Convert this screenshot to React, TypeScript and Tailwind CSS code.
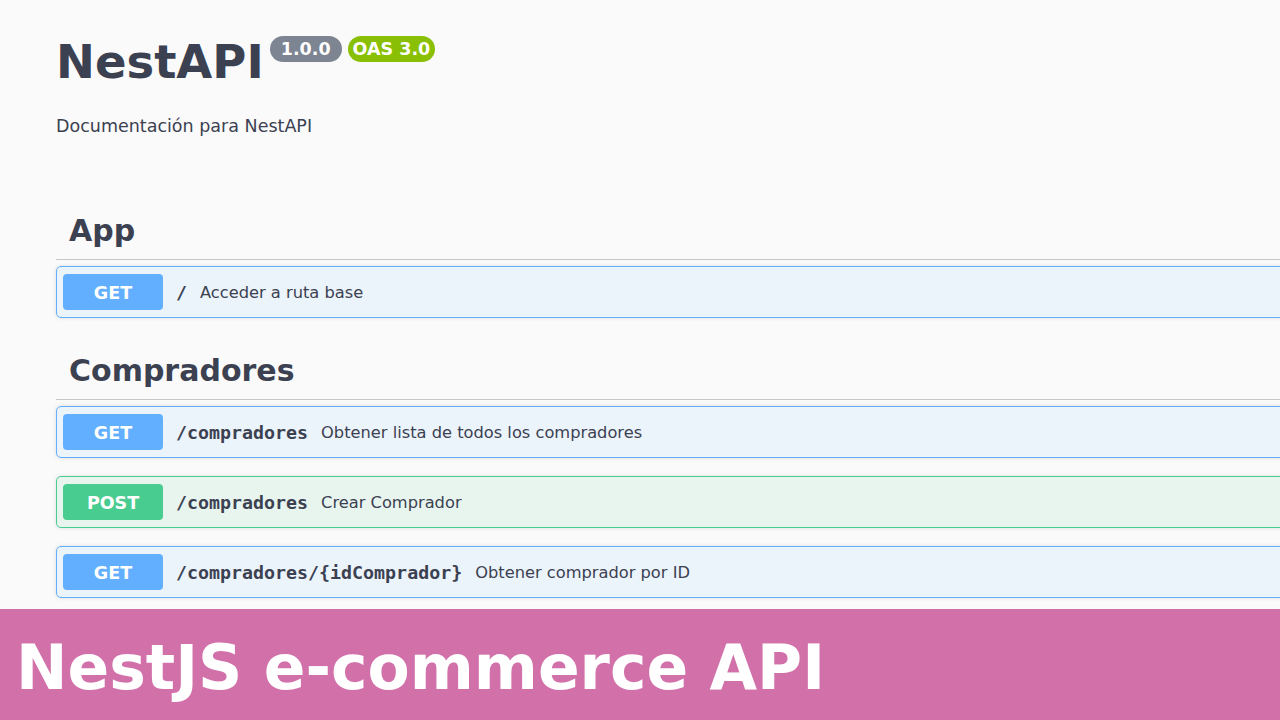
import React from "react";

const sans = { fontFamily: '"DejaVu Sans", Verdana, sans-serif' };
const mono = { fontFamily: '"DejaVu Sans Mono", monospace' };

type Op = { method: "GET" | "POST"; path: string; desc: string };

function Row({ op }: { op: Op }) {
  const isGet = op.method === "GET";
  return (
    <div
      className={`-mr-4 flex h-[52px] items-center rounded-[5px] border-[1.5px] px-[6px] ${
        isGet ? "border-[#61affe] bg-[#ebf3fb]" : "border-[#49cc90] bg-[#e8f5ef]"
      } shadow-[0_0_4px_rgba(0,0,0,0.12)]`}
    >
      <div
        className={`flex h-[36px] w-[100px] items-center justify-center rounded-[4px] pt-[2px] text-[17.5px] font-bold text-white ${
          isGet ? "bg-[#61affe]" : "bg-[#49cc90]"
        }`}
        style={sans}
      >
        {op.method}
      </div>
      <span className="ml-[13px] pt-[1px] text-[18.3px] font-bold text-[#3b4151]" style={mono}>
        {op.path}
      </span>
      <span className="ml-[13px] pt-[2px] text-[16.25px] text-[#3b4151]" style={sans}>
        {op.desc}
      </span>
    </div>
  );
}

function Tag({ name }: { name: string }) {
  return (
    <div className="flex h-[53px] items-end border-b border-[#c6c6c6] pb-[13px] pl-[13px]">
      <h3 className="text-[30px] font-bold leading-none text-[#3b4151]" style={sans}>
        {name}
      </h3>
    </div>
  );
}

export default function App() {
  return (
    <div className="flex h-screen w-full flex-col overflow-hidden bg-[#fafafa]" style={sans}>
      <div className="flex-1 overflow-hidden pl-[56px]">
        <div className="flex items-start pt-[30px]">
          <h2 className="text-[46.5px] font-bold leading-[64px] text-[#3b4151]">NestAPI</h2>
          <div className="ml-[6px] mt-[6px] flex gap-[6px]">
            <span className="flex h-[26px] items-center rounded-full bg-[#7d8492] px-[11px] text-[17.5px] font-bold text-white">
              1.0.0
            </span>
            <span className="flex h-[26px] items-center rounded-full bg-[#89bf04] px-[5px] text-[17.5px] font-bold text-white">
              OAS 3.0
            </span>
          </div>
        </div>
        <p className="mt-[19px] text-[17.5px] text-[#3b4151]">Documentación para NestAPI</p>

        <div className="mt-[68px]">
          <Tag name="App" />
          <div className="mt-[6px]">
            <Row op={{ method: "GET", path: "/", desc: "Acceder a ruta base" }} />
          </div>
        </div>

        <div className="mt-[29px]">
          <Tag name="Compradores" />
          <div className="mt-[6px] flex flex-col gap-[18px]">
            <Row op={{ method: "GET", path: "/compradores", desc: "Obtener lista de todos los compradores" }} />
            <Row op={{ method: "POST", path: "/compradores", desc: "Crear Comprador" }} />
            <Row op={{ method: "GET", path: "/compradores/{idComprador}", desc: "Obtener comprador por ID" }} />
          </div>
        </div>
      </div>
      <div className="flex h-[111px] items-center bg-[#d170a9] pl-[16px] pt-[8px]">
        <span
          className="text-[61.5px] font-bold leading-none text-white"
          style={{ fontFamily: '"DejaVu Sans", sans-serif' }}
        >
          NestJS e-commerce API
        </span>
      </div>
    </div>
  );
}
